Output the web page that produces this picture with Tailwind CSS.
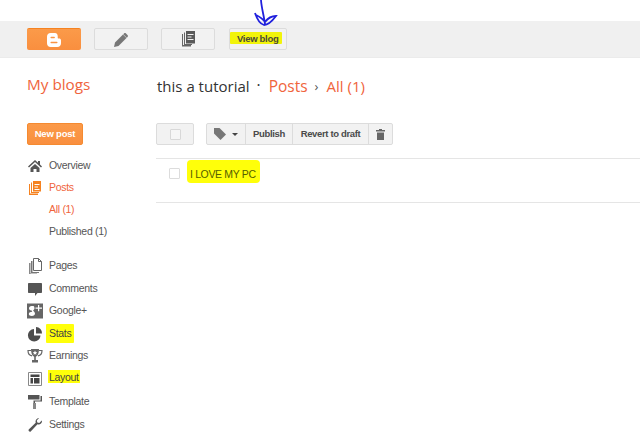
<!DOCTYPE html>
<html lang="en">
<head>
  <meta charset="UTF-8">
  <title>Blogger</title>
  <script src="https://cdn.jsdelivr.net/npm/@tailwindcss/browser@4"></script>
</head>
<body class="relative w-[640px] h-[447px] overflow-hidden bg-white font-['Liberation_Sans',sans-serif] text-[#444]">
  <!-- TOP BAR -->
  <header class="mt-[21px] h-[37px] bg-[#f0f0f0] border-b border-[#ebebeb] flex items-start pt-[7px] pl-[27px]">
    <button class="w-[54px] h-[22px] rounded-[2px] bg-gradient-to-b from-[#fb9a49] to-[#f98f3f] border-t border-[#f58220] flex items-center justify-center">
      <svg width="14" height="14" viewBox="0 0 15 15"><path fill="#fff" fill-rule="evenodd" d="M4 0h4.500C10.500 0 11.500 1.500 11.500 3.500V5c0 .8.6 1 1.500 1 1 0 2 .5 2 2v3c0 2.500-1.500 4-4 4H4c-2.500 0-4-1.500-4-4V4c0-2.500 1.500-4 4-4zM4.500 4C4 4 3.700 4.300 3.700 4.800s.3.800.8.800h3.200c.5 0 .8-.3.8-.8S8.200 4 7.700 4zM4.500 9.400c-.5 0-.8.3-.8.8s.3.800.8.800h6c.5 0 .8-.3.8-.8s-.3-.8-.8-.8z"/></svg>
    </button>
    <button class="ml-[13px] w-[54px] h-[22px] rounded-[2px] bg-[#f2f2f2] border border-[#dcdcdc] flex items-center justify-center">
      <svg width="15" height="15" viewBox="0 0 15 15"><path fill="#777" d="M0 15l1-4.500 8-8 3.500 3.500-8 8zM10 1.500c.6-.6 1.400-.6 2 0l1.500 1.500c.6.6.6 1.400 0 2l-.7.7-3.500-3.500z"/></svg>
    </button>
    <button class="ml-[13px] w-[54px] h-[22px] rounded-[2px] bg-[#f2f2f2] border border-[#dcdcdc] flex items-center justify-center">
      <svg width="13" height="16" viewBox="0 0 13 16"><path fill="#666" d="M0 3h1v11h8v1.500H0zM2 1.500h1V13h7v1H2z"/><path fill="#5a5a5a" fill-rule="evenodd" d="M4 0h9v12.500H4zM5.500 3v1h6V3zM5.500 5.500v1h4v-1zM5.500 8v1h6V8z"/></svg>
    </button>
    <button class="ml-[14px] w-[58px] h-[22px] rounded-[2px] bg-[#f2f2f2] border border-[#dcdcdc] flex items-start">
      <span class="mt-[3px] pl-[7px] pr-[4px] h-[12px] leading-[14px] bg-[#f2f40a] rounded-[1px] text-[9.500px] tracking-[-0.3px] font-bold text-[#4a4a3a] whitespace-nowrap">View blog</span>
    </button>
  </header>

  <!-- HEADING ROW -->
  <div class="h-[65px] flex items-start pl-[27px] pt-[16px]">
    <h1 class="w-[130px] text-[15.300px] leading-[20px] font-['Open_Sans',sans-serif] text-[#f0643c]">My blogs</h1>
    <div class="flex items-center text-[15.500px] leading-[20px] font-['Open_Sans',sans-serif] mt-[2px]">
      <span class="text-[15px] text-[#333]">this a tutorial</span>
      <span class="ml-[7px] mr-[8px] -mt-[2px] text-[#333]">·</span>
      <span class="text-[#f0643c]">Posts</span>
      <span class="ml-[7px] mr-[8px] text-[#555] text-[13px]">›</span>
      <span class="text-[15px] text-[#f0643c]">All (1)</span>
    </div>
  </div>

  <div class="flex">
    <!-- SIDEBAR -->
    <aside class="w-[156px] shrink-0 pl-[27px]">
      <button class="block w-[56px] h-[22px] pt-[1px] rounded-[2px] bg-gradient-to-b from-[#fb9a49] to-[#f98f3f] border border-[#f58a30] text-white text-[9.500px] tracking-[-0.2px] font-bold">New post</button>
      <ul class="mt-[9px] text-[10.500px] tracking-[-0.3px] text-[#555]">
        <li class="h-[23px] flex items-center gap-[6px]">
          <svg width="16" height="16" viewBox="0 0 16 16"><path fill="#555" d="M8 2l3 2.700V3h2v3.500l2 2-1 1-6-5.500-6 5.500-1-1zM3.500 10L8 6l4.500 4v4H9.500v-3h-3v3h-3z"/></svg>
          Overview
        </li>
        <li class="h-[22px] flex items-center gap-[6px] text-[#f0643c]">
          <svg width="16" height="16" viewBox="0 0 16 16"><path fill="#f58220" d="M2 4h1v9.500h8V15H2zM4 2.500h1v9.500h7v1H4z"/><path fill="#f58220" fill-rule="evenodd" d="M6 1h8v10.500H6zM7.500 4v1h5V4zM7.500 6.500v1h3.500v-1zM7.500 9v1h5V9z"/></svg>
          Posts
        </li>
        <li class="h-[22px] flex items-center pl-[22px] text-[#f0643c]">All (1)</li>
        <li class="h-[21px] flex items-center pl-[22px]">Published (1)</li>
        <li class="mt-[12px] h-[23px] flex items-center gap-[6px]">
          <svg width="16" height="16" viewBox="0 0 16 16"><path fill="none" stroke="#666" d="M6.500.5h5l3 3v9h-8zM11.500.5v3h3"/><path fill="#777" d="M4 3h1.500v11H12v1H4z"/><path fill="#888" d="M2 5h1.500v10.500H10v.5H2z"/></svg>
          Pages
        </li>
        <li class="h-[23px] flex items-center gap-[6px]">
          <svg width="16" height="16" viewBox="0 0 16 16"><path fill="#555" d="M2 2h12c.6 0 1 .4 1 1v8c0 .6-.4 1-1 1h-3.500L8 15v-3H2c-.6 0-1-.4-1-1V3c0-.6.4-1 1-1z"/></svg>
          Comments
        </li>
        <li class="h-[22px] flex items-center gap-[6px]">
          <svg width="16" height="16" viewBox="0 0 16 16"><path fill="#666" fill-rule="evenodd" d="M0 .5h16v15H0zM4.500 3C3 3 2 4 2 5.300s1 2.200 2.200 2.200c.3 0 .5 0 .7-.1-.2.700.2 1 .4 1.300C3.500 8.800 1.800 9.500 1.800 11c0 1.200 1.300 2 3 2 2 0 3.200-1.200 3.200-2.500 0-1.800-2-2.200-1.800-3 .2-.6 1.300-1 1.300-2.300 0-1-.6-1.600-.9-1.700l.9-.5zM11 2v2.500H8.500v1.200H11v2.500h1.200V5.700H15V4.500h-2.800V2z"/></svg>
          Google+
        </li>
        <li class="h-[23px] flex items-center gap-[6px]">
          <svg width="16" height="16" viewBox="0 0 16 16"><path fill="#4d4d4d" d="M7 3v6.500h6.500A6.300 6.300 0 1 1 7 3zM9 1a6 6 0 0 1 6 6.500H9z"/></svg>
          <span class="bg-[#ffff0a] pl-[3px] pr-[3px] -ml-[3px] h-[19px] leading-[19px] rounded-[1px] text-[#444]">Stats</span>
        </li>
        <li class="h-[22px] flex items-center gap-[6px]">
          <svg width="16" height="16" viewBox="0 0 16 16"><path fill="none" stroke="#666" stroke-width="1.200" d="M4 2.500H1c0 3 1.500 5 4 5.300M12 2.500h3c0 3-1.500 5-4 5.300"/><path fill="#666" fill-rule="evenodd" d="M4 1h8c0 4-1 7-3.200 7.700V12H11v2.500H5V12h2.200V8.700C5 8 4 5 4 1zM8 2.500l-.7 1.500-1.500.2 1.100 1-.3 1.500L8 6l1.400.7-.3-1.500 1.100-1-1.500-.2z"/></svg>
          Earnings
        </li>
        <li class="h-[23px] flex items-center gap-[6px]">
          <svg width="16" height="16" viewBox="0 0 16 16"><path fill="none" stroke="#888" d="M1.500 1.500h13v13h-13z"/><path fill="#444" d="M3.500 3.500h9V6h-9zM3.500 7H6v5.500H3.500zM7 7h5.500v5.500H7z"/></svg>
          <span class="bg-[#ffff0a] px-[1px] -mx-[1px] -mt-[5px] h-[13px] leading-[15px] text-[#444]">Layout</span>
        </li>
        <li class="h-[23px] flex items-center gap-[6px]">
          <svg width="16" height="16" viewBox="0 0 16 16"><path fill="#555" d="M1 1h11.500v4.500H1z"/><path fill="#555" d="M13.500 2H15v5.500H8V9H6.500V6.500h7z"/><path fill="#888" d="M6 9h3v6H6z"/></svg>
          Template
        </li>
        <li class="h-[23px] flex items-center gap-[6px]">
          <svg width="16" height="16" viewBox="0 0 16 16"><path fill="#555" d="M15 4c0 2.500-2.200 4-4.500 3.300L3.700 14.500c-1 .8-2.800-1-2-2l7-6.800C8 3.500 9.800 1 12 1L9.800 3.500l.5 2 2 .5 2.400-2.500z"/></svg>
          Settings
        </li>
      </ul>
    </aside>

    <!-- POST LIST -->
    <main class="flex-1">
      <div class="h-[35px] flex items-start gap-[12px]">
        <div class="w-[38px] h-[22px] rounded-[2px] bg-[#f2f2f2] border border-[#dcdcdc] flex items-center justify-center">
          <span class="w-[11px] h-[11px] rounded-[1px] border border-[#d8d8d8] bg-[#f6f6f6]"></span>
        </div>
        <div class="h-[22px] flex rounded-[2px] bg-[#f2f2f2] border border-[#dcdcdc] text-[9.500px] tracking-[-0.35px] font-bold text-[#4a4a4a]">
          <div class="w-[39px] flex items-center pl-[7px] gap-[6px] border-r border-[#dcdcdc]">
            <svg width="12" height="12" viewBox="0 0 12 12"><path fill="#777" d="M0 0h5.500L12 6.500 6.500 12 0 5.500z"/></svg>
            <span class="border-x-[3px] border-t-[3px] border-x-transparent border-t-[#444]"></span>
          </div>
          <div class="w-[47px] pt-[1px] flex items-center justify-center border-r border-[#dcdcdc]">Publish</div>
          <div class="w-[76px] pt-[1px] flex items-center justify-center border-r border-[#dcdcdc]">Revert to draft</div>
          <div class="w-[23px] flex items-center justify-center">
            <svg width="9" height="11" viewBox="0 0 9 11"><path fill="#666" d="M0 1h3V0h3v1h3v1.500H0zM1 3.500h7V11H1z"/></svg>
          </div>
        </div>
      </div>
      <div class="h-[45px] border-y border-[#e5e5e5] flex items-start">
        <span class="mt-[9px] ml-[13px] w-[11px] h-[11px] rounded-[1px] border border-[#dcdcdc]"></span>
        <span class="ml-[7px] mt-[1px] h-[23px] pl-[3px] pr-[4px] leading-[28px] bg-[#ffff0a] rounded-[4px] text-[10.500px] tracking-[-0.35px] text-[#556000]">I LOVE MY PC</span>
      </div>
    </main>
  </div>

  <!-- hand drawn arrow over the bar -->
  <svg class="absolute left-[250px] top-0" width="30" height="28" viewBox="0 0 30 28"><path fill="none" stroke="#2020dd" stroke-width="1.800" d="M11 0C11.500 8 14 16 15 24M5 13C7 19 10 24 14 25 18 25 23 20 26 16 21 16 18 18 15 22 13 19 10 17 6 15"/></svg>
</body>
</html>
